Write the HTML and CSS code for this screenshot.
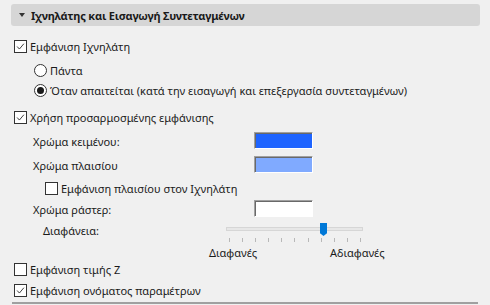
FILE: index.html
```html
<!DOCTYPE html>
<html lang="el">
<head>
    <meta charset="UTF-8">
    <title>Ιχνηλάτης και Εισαγωγή Συντεταγμένων</title>
    <link rel="stylesheet" href="styles.css">
</head>
<body>
    <div class="panel">

        <div class="header">
            <span class="arrow"></span>
            <span class="title">Ιχνηλάτης και Εισαγωγή Συντεταγμένων</span>
        </div>

        <div class="row r-tracker">
            <span class="box checked"><svg viewBox="0 0 13 13"><path d="M2.5 6.5 L5.2 9.5 L10.5 3.2"/></svg></span>
            <span>Εμφάνιση Ιχνηλάτη</span>
        </div>

        <div class="row sub r-always">
            <span class="radio"></span>
            <span>Πάντα</span>
        </div>
        <div class="row sub r-needed">
            <span class="radio on"></span>
            <span>Όταν απαιτείται (κατά την εισαγωγή και επεξεργασία συντεταγμένων)</span>
        </div>

        <div class="row r-custom">
            <span class="box checked"><svg viewBox="0 0 13 13"><path d="M2.5 6.5 L5.2 9.5 L10.5 3.2"/></svg></span>
            <span>Χρήση προσαρμοσμένης εμφάνισης</span>
        </div>

        <div class="row colorrow r-text">
            <span class="clabel">Χρώμα κειμένου:</span>
            <span class="swatch blue"></span>
        </div>
        <div class="row colorrow r-frame">
            <span class="clabel">Χρώμα πλαισίου</span>
            <span class="swatch lightblue"></span>
        </div>
        <div class="row subbox r-showframe">
            <span class="box"></span>
            <span>Εμφάνιση πλαισίου στον Ιχνηλάτη</span>
        </div>
        <div class="row colorrow r-raster">
            <span class="clabel">Χρώμα ράστερ:</span>
            <span class="swatch white"></span>
        </div>

        <div class="row slider-row">
            <span class="slabel">Διαφάνεια:</span>
            <div class="slider">
                <div class="track"></div>
                <div class="thumb"></div>
                <div class="ticks">
                    <i></i><i></i><i></i><i></i><i></i><i></i><i></i><i></i><i></i><i></i><i></i>
                </div>
            </div>
        </div>
        <div class="row slider-labels">
            <span class="lmin">Διαφανές</span>
            <span>Αδιαφανές</span>
        </div>

        <div class="row r-z">
            <span class="box"></span>
            <span>Εμφάνιση τιμής Z</span>
        </div>
        <div class="row r-param">
            <span class="box checked"><svg viewBox="0 0 13 13"><path d="M2.5 6.5 L5.2 9.5 L10.5 3.2"/></svg></span>
            <span>Εμφάνιση ονόματος παραμέτρων</span>
        </div>

        <div class="bottomline"></div>
    </div>
</body>
</html>
```

FILE: styles.css
```css
body{
    margin: 0;
    width: 490px;
    height: 305px;
    overflow: hidden;
    background-color: #f0f0f0;
    font-family: "Noto Sans", "Open Sans", sans-serif;
    font-size: 11px;
    color: #1a1a1a;
}

.panel{
    padding: 4px 10px 0px 11px;
}

.header{
    height: 22px;
    background-color: #d6d6d6;
    border-radius: 3px;
    display: flex;
    align-items: center;
    padding-left: 8px;
}

.arrow{
    width: 0;
    height: 0;
    border-left: 3.5px solid transparent;
    border-right: 3.5px solid transparent;
    border-top: 4px solid #333;
    margin-right: 6px;
}

.title{
    font-weight: bold;
    letter-spacing: -0.2px;
}

.row{
    height: 20px;
    display: flex;
    align-items: center;
    padding-left: 3px;
    white-space: nowrap;
}

.box{
    width: 11px;
    height: 11px;
    border: 1px solid #333;
    background-color: white;
    margin-right: 3px;
    flex-shrink: 0;
}

.box svg{
    display: block;
    width: 11px;
    height: 11px;
}

.box path{
    fill: none;
    stroke: #333;
    stroke-width: 1.1;
}

.radio{
    width: 11px;
    height: 11px;
    border: 1px solid #333;
    border-radius: 50%;
    background-color: white;
    margin-right: 3px;
    display: grid;
    place-items: center;
}

.radio.on::after{
    content: "";
    width: 7px;
    height: 7px;
    border-radius: 50%;
    background-color: #1a1a1a;
}

.sub{
    padding-left: 23px;
}

.subbox{
    padding-left: 34px;
}

.r-tracker{ margin-top: 10px; }
.r-always{ margin-top: 4px; }
.r-needed{ margin-top: 0px; }
.r-custom{ margin-top: 7px; }
.r-text{ margin-top: 4px; }
.r-frame{ margin-top: 4px; }
.r-showframe{ margin-top: 3px; }
.r-raster{ margin-top: 1px; }

.colorrow{
    padding-left: 22px;
}

.clabel{
    width: 221px;
}

.swatch{
    width: 57px;
    height: 15px;
    border-top: 1px solid #a0a0a0;
    border-left: 1px solid #a0a0a0;
    border-bottom: 1px solid #ffffff;
    border-right: 1px solid #ffffff;
    box-shadow: inset 1px 1px 0 #696969;
    margin-top: -1px;
}

.blue{ background-color: #1e64ff; }
.lightblue{ background-color: #80aaff; }
.white{ background-color: #ffffff; }

.slider-row{
    margin-top: 2px;
    height: 23px;
    padding-left: 32px;
    align-items: flex-start;
}

.slabel{
    width: 183px;
    margin-top: 2px;
}

.slider{
    position: relative;
    width: 137px;
    height: 23px;
}

.track{
    margin-top: 6px;
    height: 2px;
    border: 1px solid #d6d6d6;
    background-color: #e7e7e7;
}

.thumb{
    position: absolute;
    left: 94px;
    top: 2px;
    width: 7px;
    height: 13px;
    background-color: #0078d7;
    clip-path: polygon(0 0, 100% 0, 100% 78%, 50% 100%, 0 78%);
}

.ticks{
    display: flex;
    justify-content: space-between;
    padding: 0 2px 0 3px;
    margin-top: 7px;
}

.ticks i{
    width: 1px;
    height: 4px;
    background-color: #b8b8b8;
}

.slider-labels{
    height: 16px;
    padding-left: 198px;
}

.lmin{
    width: 121px;
}

.r-z{ height: 19px; }
.r-param{ margin-top: 1px; }

.bottomline{
    margin-top: 2px;
    height: 2px;
    margin-left: 1px;
    margin-right: 2px;
    background-color: #a0a0a0;
}
```
